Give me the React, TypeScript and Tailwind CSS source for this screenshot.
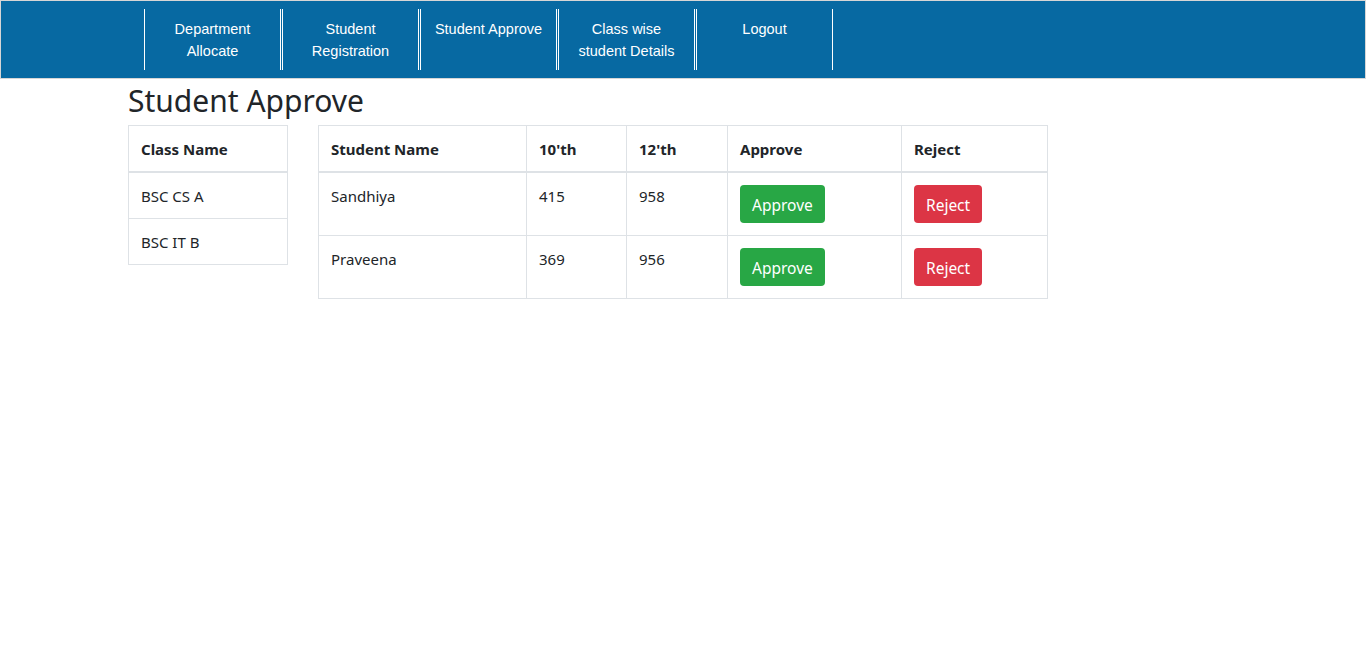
import React from 'react';

const navItems = [
  'Department Allocate',
  'Student Registration',
  'Student Approve',
  'Class wise student Details',
  'Logout',
];

const classes = ['BSC CS A', 'BSC IT B'];

const students = [
  { name: 'Sandhiya', tenth: '415', twelfth: '958' },
  { name: 'Praveena', tenth: '369', twelfth: '956' },
];

const App: React.FC = () => {
  return (
    <div className="min-h-screen bg-white text-[#212529] font-['Noto_Sans','Open_Sans',sans-serif]">
      {/* Top nav */}
      <div className="h-[79px] bg-[#0769a2] border border-[#d6d6d6]">
        <ul className="flex gap-[1px] pl-[143px] pt-[8px] font-['Liberation_Sans',Arial,sans-serif] text-[14.5px] leading-[22px] text-white">
          {navItems.map((item) => (
            <li
              key={item}
              className="w-[137px] h-[61px] border-x border-white px-[8px] pt-[9px] text-center"
            >
              {item}
            </li>
          ))}
        </ul>
      </div>

      {/* Content */}
      <div className="w-[1110px] mx-auto">
        <h2 className="text-[30px] leading-[38px] font-normal mt-[3px] mb-[5px]">Student Approve</h2>
        <div className="flex gap-[30px] items-start">
          {/* Class list */}
          <table className="w-[160px] border border-[#dee2e6] border-collapse text-[15px]">
            <thead>
              <tr>
                <th className="text-left font-bold px-[12px] pt-[12px] pb-[10px] leading-[23px] border-b-2 border-[#dee2e6]">
                  Class Name
                </th>
              </tr>
            </thead>
            <tbody>
              {classes.map((c) => (
                <tr key={c}>
                  <td className="px-[12px] pt-[12px] pb-[10px] leading-[23px] border-t border-[#dee2e6]">{c}</td>
                </tr>
              ))}
            </tbody>
          </table>

          {/* Students */}
          <table className="w-[730px] border border-[#dee2e6] border-collapse text-[15px] table-fixed">
            <thead>
              <tr className="border-b-2 border-[#dee2e6]">
                <th className="w-[208px] text-left font-bold px-[12px] pt-[12px] pb-[10px] leading-[23px] border border-[#dee2e6]">
                  Student Name
                </th>
                <th className="w-[100px] text-left font-bold px-[12px] pt-[12px] pb-[10px] leading-[23px] border border-[#dee2e6]">
                  10'th
                </th>
                <th className="w-[101px] text-left font-bold px-[12px] pt-[12px] pb-[10px] leading-[23px] border border-[#dee2e6]">
                  12'th
                </th>
                <th className="w-[174px] text-left font-bold px-[12px] pt-[12px] pb-[10px] leading-[23px] border border-[#dee2e6]">
                  Approve
                </th>
                <th className="text-left font-bold px-[12px] pt-[12px] pb-[10px] leading-[23px] border border-[#dee2e6]">
                  Reject
                </th>
              </tr>
            </thead>
            <tbody>
              {students.map((s) => (
                <tr key={s.name}>
                  <td className="align-top px-[12px] py-[12px] leading-[23px] border border-[#dee2e6]">{s.name}</td>
                  <td className="align-top px-[12px] py-[12px] leading-[23px] border border-[#dee2e6]">{s.tenth}</td>
                  <td className="align-top px-[12px] py-[12px] leading-[23px] border border-[#dee2e6]">{s.twelfth}</td>
                  <td className="align-top px-[12px] py-[12px] border border-[#dee2e6]">
                    <button className="h-[38px] px-[12px] pt-[1px] rounded-[4px] bg-[#28a745] text-white text-[15.5px] leading-[24px]">
                      Approve
                    </button>
                  </td>
                  <td className="align-top px-[12px] py-[12px] border border-[#dee2e6]">
                    <button className="h-[38px] px-[12px] pt-[1px] rounded-[4px] bg-[#dc3545] text-white text-[15.5px] leading-[24px]">
                      Reject
                    </button>
                  </td>
                </tr>
              ))}
            </tbody>
          </table>
        </div>
      </div>
    </div>
  );
};

export default App;
